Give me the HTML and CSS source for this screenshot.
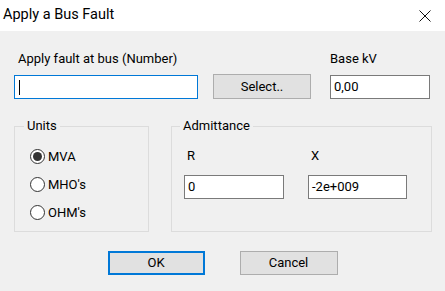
FILE: index.html
```html
<!DOCTYPE html>
<html>
<head>
<meta charset="utf-8">
<link rel="stylesheet" href="styles.css">
</head>
<body>
<div class="dialog">
  <div class="titlebar">
    <span class="title">Apply a Bus Fault</span>
    <svg class="close" width="12" height="12" viewBox="0 0 12 12"><path d="M0.5 0.5 L11.5 11.5 M11.5 0.5 L0.5 11.5" stroke="#111" stroke-width="1" fill="none"/></svg>
  </div>
  <div class="content">
    <div class="labels">
      <span class="lbl-bus">Apply fault at bus (Number)</span>
      <span class="lbl-kv">Base kV</span>
    </div>
    <div class="fields">
      <div class="input bus focused"><span class="caret"></span></div>
      <div class="btn select">Select..</div>
      <div class="input kv">0,00</div>
    </div>
    <div class="groups">
      <fieldset class="group units">
        <legend>Units</legend>
        <div class="radios">
          <div class="radio"><span class="dot checked"></span><span>MVA</span></div>
          <div class="radio"><span class="dot"></span><span>MHO's</span></div>
          <div class="radio"><span class="dot"></span><span>OHM's</span></div>
        </div>
      </fieldset>
      <fieldset class="group admit">
        <legend>Admittance</legend>
        <div class="admit-grid">
          <span class="sub">R</span>
          <span class="sub">X</span>
          <div class="input r">0</div>
          <div class="input x">-2e+009</div>
        </div>
      </fieldset>
    </div>
    <div class="buttons">
      <div class="btn ok">OK</div>
      <div class="btn cancel">Cancel</div>
    </div>
  </div>
</div>
</body>
</html>
```
FILE: styles.css
```css
html, body {
  margin: 0;
  padding: 0;
}
body {
  width: 445px;
  height: 291px;
  overflow: hidden;
  font-family: Roboto, "Noto Sans", "Liberation Sans", sans-serif;
  font-size: 13px;
  color: #000;
  background: #f0f0f0;
}
.dialog {
  width: 445px;
  height: 291px;
  background: #f0f0f0;
}
.titlebar {
  height: 31px;
  background: #fff;
  display: flex;
  align-items: center;
  justify-content: space-between;
  padding: 0 14px 0 3px;
}
.title {
  font-size: 14.5px;
  line-height: 20px;
  margin-top: -1px;
}
.close {
  display: block;
}
.content {
  padding: 20px 0 0 14px;
}
.labels {
  display: flex;
  height: 16px;
  line-height: 16px;
}
.lbl-bus {
  margin-left: 4px;
  width: 312px;
}
.fields {
  display: flex;
  align-items: flex-end;
  margin-top: 7px;
  height: 25px;
}
.input {
  box-sizing: border-box;
  height: 24px;
  background: #fff;
  border: 1px solid #7a7a7a;
  padding: 0 3px;
  line-height: 22px;
  white-space: nowrap;
}
.input.focused {
  border-color: #0078d7;
}
.bus {
  width: 184px;
  display: flex;
  align-items: center;
}
.caret {
  width: 1px;
  height: 15px;
  background: #000;
  margin-left: 1px;
}
.btn {
  box-sizing: border-box;
  background: #e1e1e1;
  border: 1px solid #adadad;
  text-align: center;
}
.select {
  width: 98px;
  height: 25px;
  line-height: 23px;
  margin-left: 15px;
}
.kv {
  width: 100px;
  margin-left: 19px;
}
.groups {
  display: flex;
  margin-top: 19px;
}
.group {
  margin: 0;
  padding: 0;
  border: 1px solid #dcdcdc;
  box-sizing: border-box;
  height: 114px;
  min-width: 0;
}
.group legend {
  padding: 0 3px;
  line-height: 16px;
}
.units {
  width: 135px;
}
.units legend {
  margin-left: 9px;
}
.admit {
  width: 261px;
  margin-left: 22px;
}
.admit legend {
  margin-left: 8px;
}
.radios {
  display: flex;
  flex-direction: column;
  padding: 8px 0 0 15px;
}
.radio {
  height: 28px;
  display: flex;
  align-items: center;
  gap: 3px;
}
.dot {
  box-sizing: border-box;
  width: 15px;
  height: 15px;
  border: 1px solid #333;
  border-radius: 50%;
  background: #fff;
  display: flex;
  align-items: center;
  justify-content: center;
}
.dot.checked::after {
  content: "";
  width: 9px;
  height: 9px;
  border-radius: 50%;
  background: #333;
}
.admit-grid {
  display: grid;
  grid-template-columns: 100px 99px;
  column-gap: 24px;
  grid-template-rows: 16px 24px;
  row-gap: 11px;
  padding: 14px 0 0 12px;
  line-height: 16px;
}
.sub {
  padding-left: 3px;
}
.buttons {
  display: flex;
  justify-content: center;
  gap: 35px;
  margin-top: 19px;
  margin-left: -14px;
}
.ok, .cancel {
  height: 24px;
  line-height: 22px;
}
.ok {
  width: 97px;
  border: 2px solid #0078d7;
  line-height: 20px;
}
.cancel {
  width: 98px;
}
```
